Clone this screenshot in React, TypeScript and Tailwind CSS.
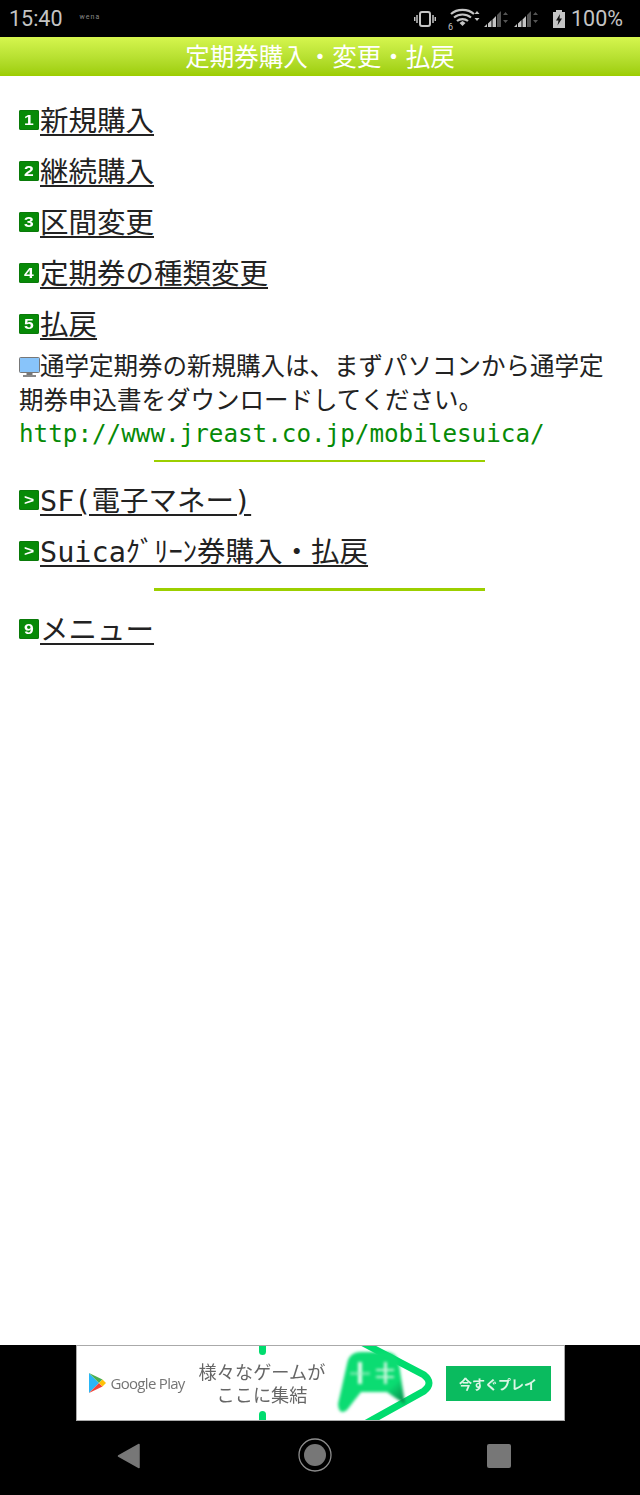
const jp = "font-['DejaVu_Sans_Mono','Noto_Sans_CJK_JP',monospace]";

const KeyIcon = ({ label }: { label: string }) => (
  <span className="mr-px flex h-[20px] w-[20px] shrink-0 items-center justify-center rounded-[2px] bg-[#078a07] font-['Liberation_Sans',sans-serif] text-[14px] leading-none font-bold text-white shadow-[inset_0_0_0_1px_#0a7a0a]">
    <span className="inline-block scale-x-125">{label}</span>
  </span>
);

const MenuRow = ({ icon, text, className }: { icon: string; text: string; className?: string }) => (
  <div className={`flex items-center ${className ?? ""}`}>
    <span className="-mt-[3px]">
      <KeyIcon label={icon} />
    </span>
    <a className="text-[28.5px] leading-[33px] text-[#222] underline decoration-2 underline-offset-[3px]">{text}</a>
  </div>
);

const Divider = ({ thick }: { thick?: boolean }) => (
  <div className={`ml-[135px] w-[331px] bg-[#9ccf00] ${thick ? "h-[3px]" : "h-[2px]"}`} />
);

const Signal = () => (
  <svg width="25" height="18" viewBox="0 0 25 18">
    <path d="M0 17h3v-3zM4 17h3.500v-7L4 13.500zM8.500 17H12V6L8.500 9.500z" fill="#c4c4c4" />
    <path d="M13 17h4V1l-4 4z" fill="#555" />
    <path d="M21.500 2l2.500 3h-5zM21.500 13l-2.500-3h5z" fill="#555" />
  </svg>
);

const StatusBar = () => (
  <div className="flex h-[37px] items-center justify-between bg-black pr-[17px] pl-[9px] font-['Roboto',sans-serif] text-[#c4c4c4]">
    <div className="flex items-center">
      <span className="text-[21.500px] leading-none">15:40</span>
      <span className="ml-[17px] -mt-[3px] text-[7px] tracking-[1px] text-[#888]">wena</span>
    </div>
    <div className="flex items-center gap-[4px]">
      <svg width="22" height="16" viewBox="0 0 22 16" fill="none">
        <rect x="6" y="1" width="10" height="14" rx="2" stroke="#c4c4c4" strokeWidth="2" />
        <path d="M3 4v8M0.7 6v4M19 4v8M21.3 6v4" stroke="#c4c4c4" strokeWidth="1.500" />
      </svg>
      <svg width="32" height="24" viewBox="0 0 32 24" fill="none" className="ml-[8px]">
        <path d="M3 7C9 1.500 20 1.500 26 7M6 10.500C11 6.500 18 6.500 23 10.500M9 14C12 11.500 17 11.500 20 14" stroke="#c4c4c4" strokeWidth="2.200" />
        <path d="M11.500 16L14.500 14L17.500 16L14.500 19Z" fill="#c4c4c4" />
        <path d="M29 4l2.500 3h-5zM29 14l-2.500-3h5z" fill="#c4c4c4" />
        <text x="0" y="23" fontSize="9" fill="#c4c4c4">6</text>
      </svg>
      <Signal />
      <span className="ml-[1px]">
        <Signal />
      </span>
      <svg width="14" height="20" viewBox="0 0 14 20" className="ml-[9px]">
        <path d="M4 1h6v2h3v16H1V3h3z" fill="#c4c4c4" />
        <path d="M8 5L4 11.500h2.500L5.500 16.500L10 9.500H7.500z" fill="#111" />
      </svg>
      <span className="ml-[1px] text-[21.500px] leading-none">100%</span>
    </div>
  </div>
);

const AdBanner = () => (
  <div className="flex h-[76px] justify-center bg-black">
    <div className="relative flex h-[76px] w-[489px] items-center overflow-hidden border border-[#aaa] bg-white">
      <svg width="17" height="20" viewBox="0 0 17 20" className="ml-[12px] shrink-0">
        <path d="M0 0v20l10-10z" fill="#29b6f6" />
        <path d="M0 0l10 10 3.500-3.500z" fill="#4caf50" />
        <path d="M0 20l10-10 3.500 3.500z" fill="#f44336" />
        <path d="M13.500 6.500L17 10l-3.500 3.500L10 10z" fill="#ffc107" />
      </svg>
      <span className="mt-[1px] ml-[5px] w-[75px] shrink-0 font-['Open_Sans',sans-serif] text-[15px] tracking-[-0.7px] whitespace-nowrap text-[#757575] blur-[0.4px]">
        Google Play
      </span>
      <div className="ml-[7px] w-[139px] shrink-0 text-center font-['Noto_Sans_CJK_JP',sans-serif] text-[18.200px] leading-[23px] whitespace-nowrap text-[#666] blur-[0.4px]">
        <div>様々なゲームが</div>
        <div>ここに集結</div>
      </div>
      <div className="absolute top-0 left-[182px] h-[9px] w-[7px] rounded-b-full bg-[#00dc6e]" />
      <div className="absolute bottom-0 left-[182px] h-[9px] w-[7px] rounded-t-full bg-[#00dc6e]" />
      <svg width="124" height="76" viewBox="0 0 124 76" className="absolute top-0 left-[258px]">
        <defs>
          <linearGradient id="pad" x1="0.300" y1="0.400" x2="0.900" y2="1">
            <stop offset="0.550" stopColor="#0bdc72" />
            <stop offset="1" stopColor="#067a42" />
          </linearGradient>
        </defs>
        <path d="M28 -3L89 29Q99 37 89 45L28 79" fill="none" stroke="#00dc6e" strokeWidth="7" />
        <g className="blur-[1.500px]">
          <path d="M12 18Q14 6 26 6H50Q62 6 64 18L70 58Q60 52 52 46H26Q18 56 12 64Q4 70 3 58Z" fill="url(#pad)" />
          <rect x="23" y="16" width="4" height="22" fill="#e4fbee" />
          <rect x="15" y="26" width="20" height="3" fill="#a5f0c8" opacity="0.6" />
          <rect x="49" y="16" width="3" height="22" fill="#c8f6dc" />
          <rect x="41" y="23" width="18" height="2" fill="#c8f6dc" />
          <rect x="41" y="30" width="18" height="2" fill="#c8f6dc" />
        </g>
      </svg>
      <div className="absolute top-[20px] left-[369px] flex h-[35px] w-[105px] items-center justify-center bg-[#0abb5f] font-['Noto_Sans_CJK_JP',sans-serif] text-[13px] font-bold text-[#dcf6e6] blur-[0.3px]">
        今すぐプレイ
      </div>
    </div>
  </div>
);

const NavBar = () => (
  <div className="flex h-[74px] items-start justify-between bg-black pt-[22px] pr-[129px] pl-[117px]">
    <svg width="24" height="26" viewBox="0 0 24 26">
      <path d="M22 1.500V24.500L1.500 13Z" fill="#777" stroke="#777" strokeWidth="1.500" strokeLinejoin="round" />
    </svg>
    <svg width="34" height="34" viewBox="0 0 34 34" className="ml-[2px] -mt-[5px]">
      <circle cx="17" cy="17" r="16" fill="none" stroke="#8c8c8c" strokeWidth="1.300" />
      <circle cx="17" cy="17" r="11" fill="#777" />
    </svg>
    <div className="mt-[1px] h-[24px] w-[24px] rounded-[2px] bg-[#777]" />
  </div>
);

export default function App() {
  return (
    <div className={`flex h-[1495px] w-[640px] flex-col overflow-hidden bg-white ${jp}`}>
      <StatusBar />
      <div className="flex h-[39px] items-center justify-center bg-gradient-to-b from-[#d6f64e] to-[#9ccd00] font-['Noto_Sans_CJK_JP',sans-serif] text-[24.500px] leading-none text-white">
        定期券購入・変更・払戻
      </div>

      <main className="flex-1 px-[19px] pt-[29px]">
        <div className="flex flex-col gap-[18px]">
          <MenuRow icon="1" text="新規購入" />
          <MenuRow icon="2" text="継続購入" />
          <MenuRow icon="3" text="区間変更" />
          <MenuRow icon="4" text="定期券の種類変更" />
          <MenuRow icon="5" text="払戻" />
        </div>

        <div className="mt-[8px] text-[24.500px] leading-[33.500px] text-[#222]">
          <svg width="21" height="21" viewBox="0 0 21 21" className="inline-block align-[-3px]">
            <rect x="0.500" y="0.500" width="20" height="15" rx="1" fill="#88c4fa" stroke="#777" />
            <rect x="7.500" y="16" width="6" height="2" fill="#777" />
            <rect x="4" y="18" width="13" height="2" fill="#888" />
          </svg>
          通学定期券の新規購入は、まずパソコンから通学定期券申込書をダウンロードしてください。
          <br />
          <a className="text-[24.250px] text-[#078a07]">http://www.jreast.co.jp/mobilesuica/</a>
        </div>

        <div className="mt-[9px]">
          <Divider />
        </div>

        <div className="mt-[23px] flex flex-col gap-[18px]">
          <MenuRow icon=">" text="SF(電子マネー)" />
          <MenuRow icon=">" text="Suicaｸﾞﾘｰﾝ券購入・払戻" />
        </div>

        <div className="mt-[19px]">
          <Divider thick />
        </div>

        <MenuRow icon="9" text="メニュー" className="mt-[23px]" />
      </main>

      <AdBanner />
      <NavBar />
    </div>
  );
}
